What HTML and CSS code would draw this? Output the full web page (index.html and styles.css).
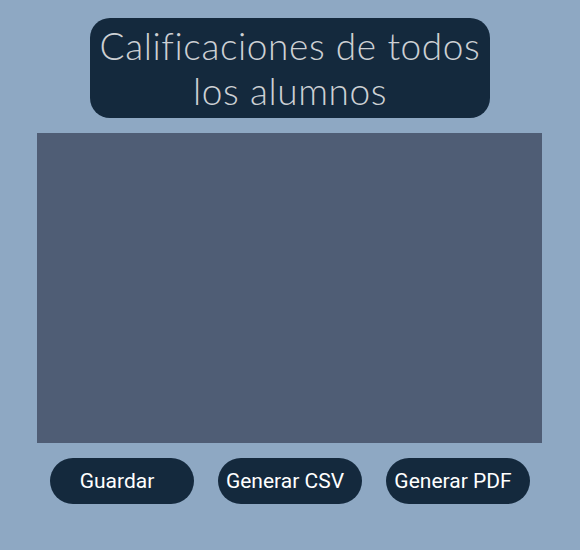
FILE: index.html
```html
<!DOCTYPE html>
<html lang="es">
<head>
<meta charset="utf-8">
<link rel="stylesheet" href="styles.css">
</head>
<body>
<main class="page">
  <h1 class="title">Calificaciones de todos los alumnos</h1>
  <div class="table-area"></div>
  <div class="actions">
    <button class="btn">Guardar</button>
    <button class="btn">Generar CSV</button>
    <button class="btn">Generar PDF</button>
  </div>
</main>
</body>
</html>
```
FILE: styles.css
```css
html, body {
  margin: 0;
  padding: 0;
  background: #8ea8c3;
  height: 100%;
}
.page {
  display: flex;
  flex-direction: column;
  align-items: center;
  padding-top: 18px;
}
.title {
  margin: 0;
  width: 400px;
  height: 100px;
  box-sizing: border-box;
  background: #14293d;
  border-radius: 20px;
  color: #cdd0d4;
  font-family: "Lato", sans-serif;
  font-weight: 300;
  font-size: 37px;
  line-height: 45px;
  text-align: center;
  padding-top: 5px;
  letter-spacing: 0.6px;
}
.table-area {
  margin-top: 15px;
  width: 505px;
  height: 310px;
  background: #4f5d75;
  margin-left: -1px;
}
.actions {
  margin-top: 15px;
  display: flex;
  gap: 24px;
}
.btn {
  width: 144px;
  height: 46px;
  border: none;
  border-radius: 23px;
  background: #14293d;
  color: #ffffff;
  font-family: "Roboto", sans-serif;
  font-size: 21px;
  padding: 0 10px 0 0;
  text-align: center;
}
```
